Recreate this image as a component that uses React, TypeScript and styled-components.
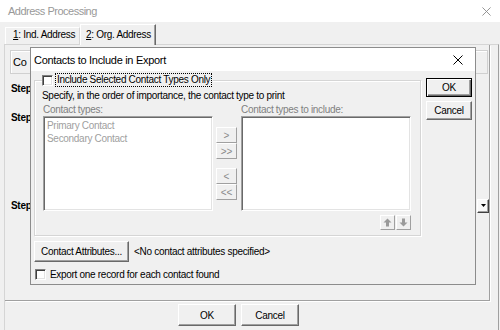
import React from "react";
import styled, { createGlobalStyle } from "styled-components";

const GlobalStyle = createGlobalStyle`
  html, body { margin: 0; padding: 0; background: #f0f0f0; }
  body { font-family: "Liberation Sans", Arial, sans-serif; font-size: 10px; color: #000; }
  *, *::before, *::after { box-sizing: border-box; }
`;

const Window = styled.div`
  position: relative;
  width: 500px;
  height: 330px;
  overflow: hidden;
  background: #f0f0f0;
  display: flex;
  flex-direction: column;
  letter-spacing: -0.3px;
`;

const TitleBar = styled.div`
  height: 22px;
  flex: none;
  background: #fff;
  display: flex;
  align-items: center;
  justify-content: space-between;
  padding: 0 9px 0 8px;
`;

const TitleText = styled.span<{ $active?: boolean }>`
  font-size: 11px;
  line-height: 14px;
  letter-spacing: ${(p) => (p.$active ? "-0.3px" : "-0.5px")};
  color: ${(p) => (p.$active ? "#000" : "#999")};
`;

const TabStrip = styled.div`
  height: 22px;
  flex: none;
  display: flex;
  align-items: flex-end;
  padding-left: 5px;
  position: relative;
  z-index: 1;
`;

const Tab = styled.div<{ $active?: boolean; $w: number }>`
  width: ${(p) => p.$w}px;
  height: ${(p) => (p.$active ? 21 : 17)}px;
  margin-bottom: ${(p) => (p.$active ? -1 : 0)}px;
  padding: ${(p) => (p.$active ? "3px 0 0 5px" : "0 0 0 7px")};
  line-height: 14px;
  background: #f0f0f0;
  border-top: 1px solid #fff;
  border-left: 1px solid #fff;
  border-right: 1px solid ${(p) => (p.$active ? "#696969" : "#d5d5d5")};
  box-shadow: ${(p) => (p.$active ? "inset -1px 0 0 #a0a0a0" : "none")};
  white-space: nowrap;
`;

const Under = styled.span`
  text-decoration: underline;
`;

const TabPanel = styled.div`
  flex: 1;
  margin-left: 4px;
  width: 495px;
  border-top: 1px solid #d5d5d5;
  border-left: 1px solid #d5d5d5;
  border-right: 1px solid #a0a0a0;
  display: flex;
  flex-direction: column;
`;

const SubPage = styled.div`
  height: 256px;
  flex: none;
  margin-right: 8px;
  border-right: 1px solid #a0a0a0;
  border-bottom: 1px solid #a0a0a0;
  box-shadow: 1px 1px 0 #fff;
  display: flex;
  flex-direction: column;
`;

const SubHeader = styled.div`
  height: 24px;
  margin: 5px 1px 0 5px;
  border: 1px solid #d0d0d0;
  box-shadow: inset 1px 1px 0 #fff;
  padding-left: 2px;
  font-size: 11px;
  line-height: 22px;
`;

const StepRow = styled.div<{ $mt: number }>`
  margin-top: ${(p) => p.$mt}px;
  height: 13px;
  display: flex;
  align-items: center;
  justify-content: space-between;
`;

const StepLabel = styled.span`
  margin-left: 6px;
  font-weight: bold;
  line-height: 13px;
`;

const DropButton = styled.div`
  width: 12px;
  height: 14px;
  flex: none;
  display: flex;
  align-items: center;
  justify-content: center;
  background: #f8f8f8;
  border: 1px solid;
  border-color: #fff #404040 #404040 #fff;
  box-shadow: inset -1px -1px 0 #a0a0a0;
`;

const ButtonRow = styled.div`
  margin-top: 3px;
  padding-left: 173px;
  display: flex;
  gap: 5px;
`;

const Button = styled.div<{ $w: number; $h: number; $default?: boolean }>`
  width: ${(p) => p.$w}px;
  height: ${(p) => p.$h}px;
  flex: none;
  display: flex;
  align-items: center;
  justify-content: center;
  background: #f0f0f0;
  white-space: nowrap;
  border: 1px solid;
  border-color: ${(p) => (p.$default ? "#000" : "#fff #696969 #696969 #fff")};
  box-shadow: ${(p) =>
    p.$default
      ? "inset 1px 1px 0 #fff, inset -1px -1px 0 #696969, inset -2px -2px 0 #a0a0a0"
      : "inset -1px -1px 0 #a0a0a0"};
`;

const Dialog = styled.div`
  position: absolute;
  left: 30px;
  top: 47px;
  width: 446px;
  height: 238px;
  border: 1px solid #8c8c8c;
  background: #f0f0f0;
  display: flex;
  flex-direction: column;
  z-index: 2;
`;

const DialogTitleBar = styled.div`
  height: 23px;
  flex: none;
  background: #fff;
  display: flex;
  align-items: center;
  justify-content: space-between;
  padding: 0 12px 0 3px;
`;

const DialogBody = styled.div`
  flex: 1;
  display: flex;
  flex-direction: column;
  padding: 9px 0 0 3px;
`;

const MainRow = styled.div`
  display: flex;
  align-items: flex-start;
  gap: 5px;
`;

const GroupBox = styled.div`
  position: relative;
  width: 387px;
  height: 156px;
  flex: none;
  border: 1px solid #d5d5d5;
  box-shadow: 1px 1px 0 #fff, inset 1px 1px 0 #fff;
  padding: 8px 9px 0 7px;
`;

const Caption = styled.div`
  position: absolute;
  top: -8px;
  left: 7px;
  height: 14px;
  display: flex;
  align-items: center;
  gap: 2px;
  background: #f0f0f0;
  padding-right: 1px;
`;

const FocusText = styled.span`
  border: 1px dotted #000;
  padding: 0 1px 0 1px;
  line-height: 12px;
`;

const Check = styled.span`
  width: 11px;
  height: 11px;
  flex: none;
  background: #fff;
  border: 1px solid;
  border-color: #808080 #fff #fff #808080;
  box-shadow: inset 1px 1px 0 #404040, inset -1px -1px 0 #e3e3e3;
`;

const Text = styled.div`
  line-height: 13px;
  white-space: nowrap;
`;

const ListGrid = styled.div`
  margin: 1px 0 0 1px;
  display: grid;
  grid-template-columns: 170px 28px 170px;
  grid-template-rows: 13px 95px auto;
`;

const Cell = styled.div<{ $col: number; $row: number }>`
  grid-column: ${(p) => p.$col};
  grid-row: ${(p) => p.$row};
`;

const ListLabel = styled(Cell)`
  line-height: 13px;
  color: #808080;
  white-space: nowrap;
`;

const ListBox = styled(Cell)`
  height: 95px;
  background: #fff;
  border: 1px solid;
  border-color: #a0a0a0 #fff #fff #a0a0a0;
  box-shadow: inset 1px 1px 0 #696969, inset -1px -1px 0 #e3e3e3;
  padding: 2px 0 0 3px;
`;

const ListItem = styled.div`
  line-height: 13px;
  color: #a0a0a0;
  white-space: nowrap;
`;

const MoveStack = styled(Cell)`
  padding: 11px 0 0 3px;
  display: flex;
  flex-direction: column;
`;

const MoveButton = styled.div<{ $gap?: number }>`
  width: 21px;
  height: 16px;
  margin-top: ${(p) => p.$gap ?? 0}px;
  display: flex;
  align-items: center;
  justify-content: center;
  background: #f0f0f0;
  border: 1px solid;
  border-color: #fff #a0a0a0 #a0a0a0 #fff;
  color: #8a8a8a;
  font-size: 10px;
  letter-spacing: 0;
`;

const OrderRow = styled(Cell)`
  justify-self: end;
  margin-top: 4px;
  display: flex;
  gap: 1px;
`;

const OrderButton = styled.div`
  width: 15px;
  height: 15px;
  display: flex;
  align-items: center;
  justify-content: center;
  background: #f0f0f0;
  border: 1px solid;
  border-color: #fff #a0a0a0 #a0a0a0 #fff;
`;

const SideColumn = styled.div`
  margin-top: -2px;
  display: flex;
  flex-direction: column;
  gap: 4px;
`;

const AttrRow = styled.div`
  margin-top: 5px;
  display: flex;
  align-items: center;
  gap: 5px;
`;

const CheckRow = styled.div`
  margin-top: 6px;
  height: 13px;
  padding-left: 1px;
  display: flex;
  align-items: center;
  gap: 4px;
`;

const CloseX = ({ color, size }: { color: string; size: number }) => (
  <svg width={size} height={size} viewBox="0 0 10 10">
    <path d="M0.5 0.5 L9.5 9.5 M9.5 0.5 L0.5 9.5" stroke={color} strokeWidth="1" fill="none" />
  </svg>
);

const Arrow = ({ down }: { down?: boolean }) => (
  <svg width="9" height="9" viewBox="0 0 9 9" style={{ transform: down ? "rotate(180deg)" : undefined }}>
    <polygon points="4.5,0.5 8.5,4.5 6,4.5 6,8.5 3,8.5 3,4.5 0.5,4.5" fill="#9a9a9a" />
  </svg>
);

export default function App() {
  return (
    <>
      <GlobalStyle />
      <Window>
        <TitleBar>
          <TitleText>Address Processing</TitleText>
          <CloseX color="#8a8a8a" size={9} />
        </TitleBar>
        <TabStrip>
          <Tab $w={75}>
            <Under>1</Under>: Ind. Address
          </Tab>
          <Tab $w={76} $active>
            <Under>2</Under>: Org. Address
          </Tab>
        </TabStrip>
        <TabPanel>
          <SubPage>
            <SubHeader>Co</SubHeader>
            <StepRow $mt={8}>
              <StepLabel>Step</StepLabel>
            </StepRow>
            <StepRow $mt={16}>
              <StepLabel>Step</StepLabel>
            </StepRow>
            <StepRow $mt={75}>
              <StepLabel>Step</StepLabel>
              <DropButton>
                <svg width="5" height="3" viewBox="0 0 5 3">
                  <polygon points="0,0 5,0 2.5,3" fill="#000" />
                </svg>
              </DropButton>
            </StepRow>
          </SubPage>
          <ButtonRow>
            <Button $w={58} $h={22}>OK</Button>
            <Button $w={58} $h={22}>Cancel</Button>
          </ButtonRow>
        </TabPanel>

        <Dialog>
          <DialogTitleBar>
            <TitleText $active>Contacts to Include in Export</TitleText>
            <CloseX color="#000" size={10} />
          </DialogTitleBar>
          <DialogBody>
            <MainRow>
              <GroupBox>
                <Caption>
                  <Check />
                  <FocusText>Include Selected Contact Types Only</FocusText>
                </Caption>
                <Text>Specify, in the order of importance, the contact type to print</Text>
                <ListGrid>
                  <ListLabel $col={1} $row={1}>Contact types:</ListLabel>
                  <ListLabel $col={3} $row={1}>Contact types to include:</ListLabel>
                  <ListBox $col={1} $row={2}>
                    <ListItem>Primary Contact</ListItem>
                    <ListItem>Secondary Contact</ListItem>
                  </ListBox>
                  <MoveStack $col={2} $row={2}>
                    <MoveButton>&gt;</MoveButton>
                    <MoveButton>&gt;&gt;</MoveButton>
                    <MoveButton $gap={9}>&lt;</MoveButton>
                    <MoveButton>&lt;&lt;</MoveButton>
                  </MoveStack>
                  <ListBox $col={3} $row={2} />
                  <OrderRow $col={3} $row={3}>
                    <OrderButton>
                      <Arrow />
                    </OrderButton>
                    <OrderButton>
                      <Arrow down />
                    </OrderButton>
                  </OrderRow>
                </ListGrid>
              </GroupBox>
              <SideColumn>
                <Button $w={46} $h={19} $default>OK</Button>
                <Button $w={46} $h={19}>Cancel</Button>
              </SideColumn>
            </MainRow>
            <AttrRow>
              <Button $w={95} $h={21}>Contact Attributes...</Button>
              <Text>&lt;No contact attributes specified&gt;</Text>
            </AttrRow>
            <CheckRow>
              <Check />
              <Text>Export one record for each contact found</Text>
            </CheckRow>
          </DialogBody>
        </Dialog>
      </Window>
    </>
  );
}
